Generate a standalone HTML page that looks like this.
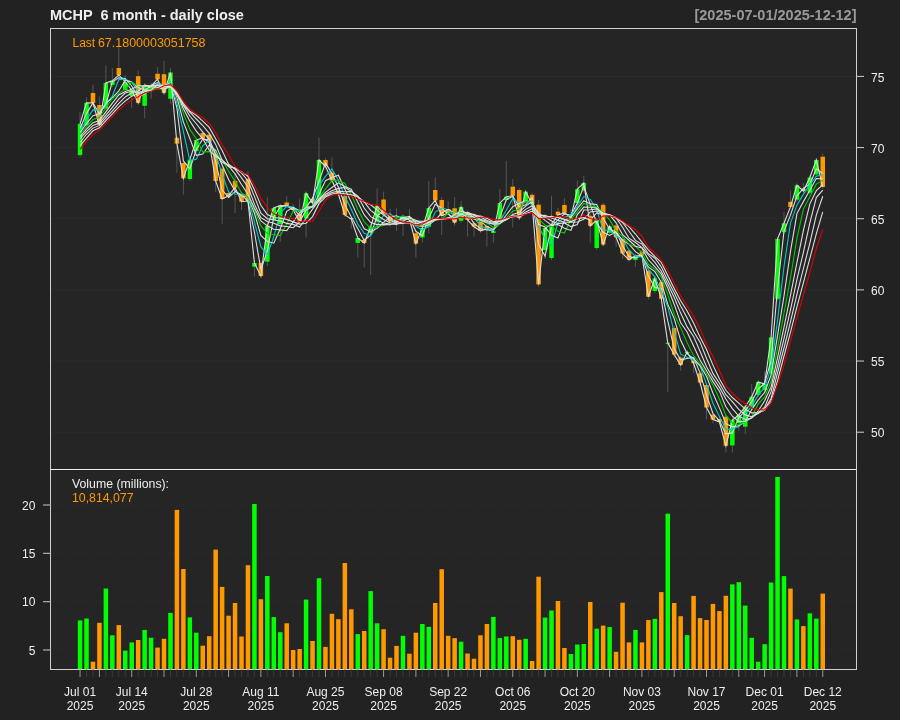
<!DOCTYPE html><html><head><meta charset="utf-8"><style>html,body{margin:0;padding:0;background:#222222;width:900px;height:720px;overflow:hidden}</style></head><body><svg width="900" height="720" viewBox="0 0 900 720" style="position:absolute;left:0;top:0;will-change:transform">
<rect x="0" y="0" width="900" height="720" fill="#222222"/>
<rect x="50.5" y="28.5" width="806" height="641" fill="#252525"/>
<line x1="51" y1="76.40" x2="856" y2="76.40" stroke="#2c2c2c" stroke-width="1"/>
<line x1="51" y1="147.56" x2="856" y2="147.56" stroke="#2c2c2c" stroke-width="1"/>
<line x1="51" y1="218.72" x2="856" y2="218.72" stroke="#2c2c2c" stroke-width="1"/>
<line x1="51" y1="289.88" x2="856" y2="289.88" stroke="#2c2c2c" stroke-width="1"/>
<line x1="51" y1="361.04" x2="856" y2="361.04" stroke="#2c2c2c" stroke-width="1"/>
<line x1="51" y1="432.20" x2="856" y2="432.20" stroke="#2c2c2c" stroke-width="1"/>
<line x1="51" y1="505.00" x2="856" y2="505.00" stroke="#2f2f2f" stroke-width="1" stroke-dasharray="1,2"/>
<line x1="51" y1="553.33" x2="856" y2="553.33" stroke="#2f2f2f" stroke-width="1" stroke-dasharray="1,2"/>
<line x1="51" y1="601.66" x2="856" y2="601.66" stroke="#2f2f2f" stroke-width="1" stroke-dasharray="1,2"/>
<line x1="51" y1="650.00" x2="856" y2="650.00" stroke="#2f2f2f" stroke-width="1" stroke-dasharray="1,2"/>
<line x1="80.05" y1="112.00" x2="80.05" y2="157.00" stroke="#555555" stroke-width="1"/>
<line x1="86.51" y1="97.20" x2="86.51" y2="127.30" stroke="#555555" stroke-width="1"/>
<line x1="92.97" y1="84.70" x2="92.97" y2="105.00" stroke="#555555" stroke-width="1"/>
<line x1="99.42" y1="96.40" x2="99.42" y2="127.00" stroke="#555555" stroke-width="1"/>
<line x1="105.88" y1="65.60" x2="105.88" y2="110.60" stroke="#555555" stroke-width="1"/>
<line x1="112.34" y1="68.00" x2="112.34" y2="87.00" stroke="#555555" stroke-width="1"/>
<line x1="118.80" y1="45.00" x2="118.80" y2="77.00" stroke="#555555" stroke-width="1"/>
<line x1="125.26" y1="75.00" x2="125.26" y2="92.00" stroke="#555555" stroke-width="1"/>
<line x1="131.72" y1="88.00" x2="131.72" y2="108.00" stroke="#555555" stroke-width="1"/>
<line x1="138.17" y1="70.40" x2="138.17" y2="104.90" stroke="#555555" stroke-width="1"/>
<line x1="144.63" y1="83.00" x2="144.63" y2="118.30" stroke="#555555" stroke-width="1"/>
<line x1="151.09" y1="82.50" x2="151.09" y2="98.75" stroke="#555555" stroke-width="1"/>
<line x1="157.55" y1="67.00" x2="157.55" y2="81.20" stroke="#555555" stroke-width="1"/>
<line x1="164.01" y1="60.80" x2="164.01" y2="94.90" stroke="#555555" stroke-width="1"/>
<line x1="170.47" y1="68.00" x2="170.47" y2="103.75" stroke="#555555" stroke-width="1"/>
<line x1="176.92" y1="135.80" x2="176.92" y2="172.80" stroke="#555555" stroke-width="1"/>
<line x1="183.38" y1="161.00" x2="183.38" y2="194.30" stroke="#555555" stroke-width="1"/>
<line x1="189.84" y1="157.60" x2="189.84" y2="181.00" stroke="#555555" stroke-width="1"/>
<line x1="196.30" y1="138.00" x2="196.30" y2="153.00" stroke="#555555" stroke-width="1"/>
<line x1="202.76" y1="131.00" x2="202.76" y2="140.00" stroke="#555555" stroke-width="1"/>
<line x1="209.22" y1="132.60" x2="209.22" y2="144.20" stroke="#555555" stroke-width="1"/>
<line x1="215.67" y1="151.30" x2="215.67" y2="192.00" stroke="#555555" stroke-width="1"/>
<line x1="222.13" y1="166.60" x2="222.13" y2="224.00" stroke="#555555" stroke-width="1"/>
<line x1="228.59" y1="191.00" x2="228.59" y2="197.70" stroke="#555555" stroke-width="1"/>
<line x1="235.05" y1="173.00" x2="235.05" y2="213.00" stroke="#555555" stroke-width="1"/>
<line x1="241.51" y1="192.00" x2="241.51" y2="210.00" stroke="#555555" stroke-width="1"/>
<line x1="247.97" y1="171.00" x2="247.97" y2="203.00" stroke="#555555" stroke-width="1"/>
<line x1="254.42" y1="260.00" x2="254.42" y2="276.70" stroke="#555555" stroke-width="1"/>
<line x1="260.88" y1="261.00" x2="260.88" y2="278.00" stroke="#555555" stroke-width="1"/>
<line x1="267.34" y1="197.50" x2="267.34" y2="266.00" stroke="#555555" stroke-width="1"/>
<line x1="273.80" y1="206.00" x2="273.80" y2="222.00" stroke="#555555" stroke-width="1"/>
<line x1="280.26" y1="203.50" x2="280.26" y2="241.70" stroke="#555555" stroke-width="1"/>
<line x1="286.72" y1="196.25" x2="286.72" y2="207.80" stroke="#555555" stroke-width="1"/>
<line x1="293.17" y1="204.00" x2="293.17" y2="212.00" stroke="#555555" stroke-width="1"/>
<line x1="299.63" y1="198.75" x2="299.63" y2="223.70" stroke="#555555" stroke-width="1"/>
<line x1="306.09" y1="191.25" x2="306.09" y2="237.50" stroke="#555555" stroke-width="1"/>
<line x1="312.55" y1="197.00" x2="312.55" y2="205.00" stroke="#555555" stroke-width="1"/>
<line x1="319.01" y1="137.50" x2="319.01" y2="204.00" stroke="#555555" stroke-width="1"/>
<line x1="325.47" y1="158.00" x2="325.47" y2="168.25" stroke="#555555" stroke-width="1"/>
<line x1="331.92" y1="157.50" x2="331.92" y2="182.60" stroke="#555555" stroke-width="1"/>
<line x1="338.38" y1="189.00" x2="338.38" y2="196.00" stroke="#555555" stroke-width="1"/>
<line x1="344.84" y1="194.25" x2="344.84" y2="217.00" stroke="#555555" stroke-width="1"/>
<line x1="351.30" y1="217.50" x2="351.30" y2="228.75" stroke="#555555" stroke-width="1"/>
<line x1="357.76" y1="236.00" x2="357.76" y2="257.50" stroke="#555555" stroke-width="1"/>
<line x1="364.22" y1="238.00" x2="364.22" y2="267.50" stroke="#555555" stroke-width="1"/>
<line x1="370.67" y1="224.70" x2="370.67" y2="275.00" stroke="#555555" stroke-width="1"/>
<line x1="377.13" y1="188.30" x2="377.13" y2="223.70" stroke="#555555" stroke-width="1"/>
<line x1="383.59" y1="191.70" x2="383.59" y2="215.75" stroke="#555555" stroke-width="1"/>
<line x1="390.05" y1="208.90" x2="390.05" y2="226.25" stroke="#555555" stroke-width="1"/>
<line x1="396.51" y1="208.20" x2="396.51" y2="230.80" stroke="#555555" stroke-width="1"/>
<line x1="402.97" y1="214.50" x2="402.97" y2="236.00" stroke="#555555" stroke-width="1"/>
<line x1="409.42" y1="208.90" x2="409.42" y2="221.00" stroke="#555555" stroke-width="1"/>
<line x1="415.88" y1="231.20" x2="415.88" y2="257.50" stroke="#555555" stroke-width="1"/>
<line x1="422.34" y1="226.00" x2="422.34" y2="242.50" stroke="#555555" stroke-width="1"/>
<line x1="428.80" y1="181.00" x2="428.80" y2="233.00" stroke="#555555" stroke-width="1"/>
<line x1="435.26" y1="177.50" x2="435.26" y2="202.40" stroke="#555555" stroke-width="1"/>
<line x1="441.71" y1="197.00" x2="441.71" y2="235.00" stroke="#555555" stroke-width="1"/>
<line x1="448.17" y1="201.00" x2="448.17" y2="215.00" stroke="#555555" stroke-width="1"/>
<line x1="454.63" y1="197.00" x2="454.63" y2="225.80" stroke="#555555" stroke-width="1"/>
<line x1="461.09" y1="201.00" x2="461.09" y2="222.80" stroke="#555555" stroke-width="1"/>
<line x1="467.55" y1="210.50" x2="467.55" y2="236.70" stroke="#555555" stroke-width="1"/>
<line x1="474.01" y1="221.30" x2="474.01" y2="236.70" stroke="#555555" stroke-width="1"/>
<line x1="480.46" y1="219.70" x2="480.46" y2="232.80" stroke="#555555" stroke-width="1"/>
<line x1="486.92" y1="224.00" x2="486.92" y2="246.70" stroke="#555555" stroke-width="1"/>
<line x1="493.38" y1="229.25" x2="493.38" y2="242.50" stroke="#555555" stroke-width="1"/>
<line x1="499.84" y1="189.00" x2="499.84" y2="221.00" stroke="#555555" stroke-width="1"/>
<line x1="506.30" y1="160.80" x2="506.30" y2="202.00" stroke="#555555" stroke-width="1"/>
<line x1="512.76" y1="179.00" x2="512.76" y2="227.50" stroke="#555555" stroke-width="1"/>
<line x1="519.21" y1="188.00" x2="519.21" y2="220.00" stroke="#555555" stroke-width="1"/>
<line x1="525.67" y1="189.70" x2="525.67" y2="203.70" stroke="#555555" stroke-width="1"/>
<line x1="532.13" y1="192.80" x2="532.13" y2="206.00" stroke="#555555" stroke-width="1"/>
<line x1="538.59" y1="200.00" x2="538.59" y2="287.00" stroke="#555555" stroke-width="1"/>
<line x1="545.05" y1="226.00" x2="545.05" y2="259.00" stroke="#555555" stroke-width="1"/>
<line x1="551.51" y1="195.70" x2="551.51" y2="260.00" stroke="#555555" stroke-width="1"/>
<line x1="557.96" y1="208.00" x2="557.96" y2="217.00" stroke="#555555" stroke-width="1"/>
<line x1="564.42" y1="198.30" x2="564.42" y2="214.90" stroke="#555555" stroke-width="1"/>
<line x1="570.88" y1="209.00" x2="570.88" y2="222.40" stroke="#555555" stroke-width="1"/>
<line x1="577.34" y1="180.40" x2="577.34" y2="205.00" stroke="#555555" stroke-width="1"/>
<line x1="583.80" y1="175.80" x2="583.80" y2="192.40" stroke="#555555" stroke-width="1"/>
<line x1="590.26" y1="213.80" x2="590.26" y2="242.70" stroke="#555555" stroke-width="1"/>
<line x1="596.71" y1="218.00" x2="596.71" y2="250.00" stroke="#555555" stroke-width="1"/>
<line x1="603.17" y1="202.80" x2="603.17" y2="246.50" stroke="#555555" stroke-width="1"/>
<line x1="609.63" y1="224.40" x2="609.63" y2="234.80" stroke="#555555" stroke-width="1"/>
<line x1="616.09" y1="223.50" x2="616.09" y2="247.00" stroke="#555555" stroke-width="1"/>
<line x1="622.55" y1="237.00" x2="622.55" y2="259.00" stroke="#555555" stroke-width="1"/>
<line x1="629.01" y1="248.80" x2="629.01" y2="261.80" stroke="#555555" stroke-width="1"/>
<line x1="635.46" y1="254.00" x2="635.46" y2="267.00" stroke="#555555" stroke-width="1"/>
<line x1="641.92" y1="249.70" x2="641.92" y2="257.30" stroke="#555555" stroke-width="1"/>
<line x1="648.38" y1="268.60" x2="648.38" y2="299.50" stroke="#555555" stroke-width="1"/>
<line x1="654.84" y1="276.30" x2="654.84" y2="293.00" stroke="#555555" stroke-width="1"/>
<line x1="661.30" y1="280.00" x2="661.30" y2="300.80" stroke="#555555" stroke-width="1"/>
<line x1="667.76" y1="340.60" x2="667.76" y2="392.00" stroke="#555555" stroke-width="1"/>
<line x1="674.21" y1="326.00" x2="674.21" y2="356.60" stroke="#555555" stroke-width="1"/>
<line x1="680.67" y1="355.50" x2="680.67" y2="370.80" stroke="#555555" stroke-width="1"/>
<line x1="687.13" y1="350.00" x2="687.13" y2="355.00" stroke="#555555" stroke-width="1"/>
<line x1="693.59" y1="358.80" x2="693.59" y2="373.30" stroke="#555555" stroke-width="1"/>
<line x1="700.05" y1="371.30" x2="700.05" y2="384.50" stroke="#555555" stroke-width="1"/>
<line x1="706.51" y1="383.00" x2="706.51" y2="419.60" stroke="#555555" stroke-width="1"/>
<line x1="712.96" y1="412.60" x2="712.96" y2="423.30" stroke="#555555" stroke-width="1"/>
<line x1="719.42" y1="417.00" x2="719.42" y2="424.00" stroke="#555555" stroke-width="1"/>
<line x1="725.88" y1="414.70" x2="725.88" y2="452.50" stroke="#555555" stroke-width="1"/>
<line x1="732.34" y1="418.00" x2="732.34" y2="452.50" stroke="#555555" stroke-width="1"/>
<line x1="738.80" y1="413.00" x2="738.80" y2="431.00" stroke="#555555" stroke-width="1"/>
<line x1="745.25" y1="404.70" x2="745.25" y2="434.00" stroke="#555555" stroke-width="1"/>
<line x1="751.71" y1="384.00" x2="751.71" y2="408.70" stroke="#555555" stroke-width="1"/>
<line x1="758.17" y1="380.00" x2="758.17" y2="396.80" stroke="#555555" stroke-width="1"/>
<line x1="764.63" y1="371.00" x2="764.63" y2="392.00" stroke="#555555" stroke-width="1"/>
<line x1="771.09" y1="335.40" x2="771.09" y2="375.40" stroke="#555555" stroke-width="1"/>
<line x1="777.55" y1="236.90" x2="777.55" y2="300.90" stroke="#555555" stroke-width="1"/>
<line x1="784.00" y1="212.00" x2="784.00" y2="234.20" stroke="#555555" stroke-width="1"/>
<line x1="790.46" y1="190.60" x2="790.46" y2="208.90" stroke="#555555" stroke-width="1"/>
<line x1="796.92" y1="183.30" x2="796.92" y2="201.70" stroke="#555555" stroke-width="1"/>
<line x1="803.38" y1="183.00" x2="803.38" y2="193.00" stroke="#555555" stroke-width="1"/>
<line x1="809.84" y1="175.50" x2="809.84" y2="194.80" stroke="#555555" stroke-width="1"/>
<line x1="816.30" y1="158.00" x2="816.30" y2="176.40" stroke="#555555" stroke-width="1"/>
<line x1="822.75" y1="153.30" x2="822.75" y2="188.90" stroke="#555555" stroke-width="1"/>
<rect x="77.80" y="123.90" width="4.5" height="31.20" fill="#00ff00"/>
<rect x="84.26" y="102.80" width="4.5" height="22.50" fill="#00ff00"/>
<rect x="90.72" y="93.00" width="4.5" height="10.00" fill="#ff9900"/>
<rect x="97.17" y="105.00" width="4.5" height="20.00" fill="#ff9900"/>
<rect x="103.63" y="83.00" width="4.5" height="25.60" fill="#00ff00"/>
<rect x="110.09" y="80.80" width="4.5" height="4.20" fill="#00ff00"/>
<rect x="116.55" y="68.00" width="4.5" height="7.00" fill="#ff9900"/>
<rect x="123.01" y="82.00" width="4.5" height="8.00" fill="#00ff00"/>
<rect x="129.47" y="90.00" width="4.5" height="6.00" fill="#00ff00"/>
<rect x="135.92" y="76.20" width="4.5" height="26.70" fill="#ff9900"/>
<rect x="142.38" y="85.00" width="4.5" height="20.80" fill="#00ff00"/>
<rect x="148.84" y="86.00" width="4.5" height="4.00" fill="#00ff00"/>
<rect x="155.30" y="73.75" width="4.5" height="5.45" fill="#ff9900"/>
<rect x="161.76" y="74.20" width="4.5" height="18.70" fill="#ff9900"/>
<rect x="168.22" y="72.50" width="4.5" height="26.25" fill="#00ff00"/>
<rect x="174.67" y="137.80" width="4.5" height="5.80" fill="#ff9900"/>
<rect x="181.13" y="163.00" width="4.5" height="15.30" fill="#ff9900"/>
<rect x="187.59" y="159.60" width="4.5" height="19.40" fill="#00ff00"/>
<rect x="194.05" y="140.00" width="4.5" height="11.00" fill="#00ff00"/>
<rect x="200.51" y="133.00" width="4.5" height="5.00" fill="#ff9900"/>
<rect x="206.97" y="134.60" width="4.5" height="7.60" fill="#ff9900"/>
<rect x="213.42" y="153.30" width="4.5" height="27.70" fill="#ff9900"/>
<rect x="219.88" y="168.60" width="4.5" height="30.40" fill="#ff9900"/>
<rect x="226.34" y="193.00" width="4.5" height="2.70" fill="#ff9900"/>
<rect x="232.80" y="180.80" width="4.5" height="6.70" fill="#ff9900"/>
<rect x="239.26" y="194.00" width="4.5" height="7.70" fill="#ff9900"/>
<rect x="245.72" y="179.00" width="4.5" height="22.00" fill="#ff9900"/>
<rect x="252.17" y="263.00" width="4.5" height="3.70" fill="#00ff00"/>
<rect x="258.63" y="263.00" width="4.5" height="13.00" fill="#ff9900"/>
<rect x="265.09" y="225.80" width="4.5" height="35.90" fill="#00ff00"/>
<rect x="271.55" y="208.00" width="4.5" height="12.00" fill="#00ff00"/>
<rect x="278.01" y="205.50" width="4.5" height="18.50" fill="#00ff00"/>
<rect x="284.47" y="202.50" width="4.5" height="3.30" fill="#ff9900"/>
<rect x="290.92" y="208.00" width="4.5" height="2.00" fill="#ff9900"/>
<rect x="297.38" y="213.30" width="4.5" height="8.40" fill="#ff9900"/>
<rect x="303.84" y="193.30" width="4.5" height="25.00" fill="#00ff00"/>
<rect x="310.30" y="199.00" width="4.5" height="4.00" fill="#ff9900"/>
<rect x="316.76" y="160.00" width="4.5" height="42.00" fill="#00ff00"/>
<rect x="323.22" y="160.00" width="4.5" height="6.25" fill="#ff9900"/>
<rect x="329.67" y="172.50" width="4.5" height="8.10" fill="#ff9900"/>
<rect x="336.13" y="191.00" width="4.5" height="3.00" fill="#ff9900"/>
<rect x="342.59" y="196.25" width="4.5" height="18.75" fill="#ff9900"/>
<rect x="349.05" y="218.00" width="4.5" height="1.00" fill="#ff9900"/>
<rect x="355.51" y="238.00" width="4.5" height="5.00" fill="#00ff00"/>
<rect x="361.97" y="240.00" width="4.5" height="3.00" fill="#ff9900"/>
<rect x="368.42" y="226.70" width="4.5" height="6.30" fill="#00ff00"/>
<rect x="374.88" y="205.80" width="4.5" height="15.90" fill="#00ff00"/>
<rect x="381.34" y="199.50" width="4.5" height="14.25" fill="#ff9900"/>
<rect x="387.80" y="215.80" width="4.5" height="5.60" fill="#ff9900"/>
<rect x="394.26" y="219.30" width="4.5" height="2.70" fill="#ff9900"/>
<rect x="400.72" y="216.50" width="4.5" height="4.20" fill="#00ff00"/>
<rect x="407.17" y="217.20" width="4.5" height="1.80" fill="#ff9900"/>
<rect x="413.63" y="233.20" width="4.5" height="10.40" fill="#ff9900"/>
<rect x="420.09" y="228.00" width="4.5" height="9.50" fill="#00ff00"/>
<rect x="426.55" y="208.00" width="4.5" height="18.70" fill="#00ff00"/>
<rect x="433.01" y="190.00" width="4.5" height="10.40" fill="#ff9900"/>
<rect x="439.46" y="200.00" width="4.5" height="15.80" fill="#ff9900"/>
<rect x="445.92" y="209.00" width="4.5" height="4.00" fill="#ff9900"/>
<rect x="452.38" y="208.30" width="4.5" height="14.20" fill="#ff9900"/>
<rect x="458.84" y="207.00" width="4.5" height="13.80" fill="#00ff00"/>
<rect x="465.30" y="212.50" width="4.5" height="7.50" fill="#ff9900"/>
<rect x="471.76" y="223.30" width="4.5" height="3.40" fill="#ff9900"/>
<rect x="478.21" y="221.70" width="4.5" height="9.10" fill="#ff9900"/>
<rect x="484.67" y="226.00" width="4.5" height="3.00" fill="#ff9900"/>
<rect x="491.13" y="231.25" width="4.5" height="1.75" fill="#00ff00"/>
<rect x="497.59" y="203.00" width="4.5" height="16.00" fill="#00ff00"/>
<rect x="504.05" y="196.70" width="4.5" height="3.30" fill="#00ff00"/>
<rect x="510.51" y="186.70" width="4.5" height="9.10" fill="#ff9900"/>
<rect x="516.96" y="190.00" width="4.5" height="28.00" fill="#ff9900"/>
<rect x="523.42" y="191.70" width="4.5" height="10.00" fill="#00ff00"/>
<rect x="529.88" y="194.80" width="4.5" height="9.20" fill="#ff9900"/>
<rect x="536.34" y="204.70" width="4.5" height="79.70" fill="#ff9900"/>
<rect x="542.80" y="228.00" width="4.5" height="22.00" fill="#00ff00"/>
<rect x="549.26" y="224.60" width="4.5" height="33.40" fill="#00ff00"/>
<rect x="555.71" y="211.70" width="4.5" height="3.30" fill="#ff9900"/>
<rect x="562.17" y="205.00" width="4.5" height="7.90" fill="#ff9900"/>
<rect x="568.63" y="217.50" width="4.5" height="2.90" fill="#00ff00"/>
<rect x="575.09" y="189.20" width="4.5" height="13.80" fill="#00ff00"/>
<rect x="581.55" y="183.00" width="4.5" height="7.40" fill="#00ff00"/>
<rect x="588.01" y="215.80" width="4.5" height="10.00" fill="#ff9900"/>
<rect x="594.46" y="220.00" width="4.5" height="28.00" fill="#00ff00"/>
<rect x="600.92" y="204.80" width="4.5" height="39.70" fill="#ff9900"/>
<rect x="607.38" y="226.40" width="4.5" height="6.40" fill="#00ff00"/>
<rect x="613.84" y="225.50" width="4.5" height="11.80" fill="#ff9900"/>
<rect x="620.30" y="239.00" width="4.5" height="14.50" fill="#ff9900"/>
<rect x="626.76" y="250.80" width="4.5" height="9.00" fill="#ff9900"/>
<rect x="633.21" y="256.00" width="4.5" height="4.00" fill="#00ff00"/>
<rect x="639.67" y="251.70" width="4.5" height="3.60" fill="#ff9900"/>
<rect x="646.13" y="270.60" width="4.5" height="26.20" fill="#ff9900"/>
<rect x="652.59" y="278.30" width="4.5" height="12.70" fill="#00ff00"/>
<rect x="659.05" y="282.00" width="4.5" height="16.80" fill="#ff9900"/>
<rect x="665.51" y="342.80" width="4.5" height="1.00" fill="#00ff00"/>
<rect x="671.96" y="328.00" width="4.5" height="26.60" fill="#ff9900"/>
<rect x="678.42" y="357.50" width="4.5" height="7.50" fill="#ff9900"/>
<rect x="684.88" y="352.00" width="4.5" height="1.00" fill="#00ff00"/>
<rect x="691.34" y="360.80" width="4.5" height="2.50" fill="#ff9900"/>
<rect x="697.80" y="373.30" width="4.5" height="9.20" fill="#ff9900"/>
<rect x="704.26" y="385.00" width="4.5" height="22.50" fill="#ff9900"/>
<rect x="710.71" y="414.60" width="4.5" height="5.00" fill="#ff9900"/>
<rect x="717.17" y="419.00" width="4.5" height="3.00" fill="#ff9900"/>
<rect x="723.63" y="416.70" width="4.5" height="29.10" fill="#ff9900"/>
<rect x="730.09" y="420.00" width="4.5" height="25.40" fill="#00ff00"/>
<rect x="736.55" y="415.00" width="4.5" height="8.00" fill="#00ff00"/>
<rect x="743.00" y="406.70" width="4.5" height="20.00" fill="#00ff00"/>
<rect x="749.46" y="396.70" width="4.5" height="10.00" fill="#00ff00"/>
<rect x="755.92" y="382.00" width="4.5" height="12.80" fill="#00ff00"/>
<rect x="762.38" y="384.00" width="4.5" height="6.00" fill="#00ff00"/>
<rect x="768.84" y="337.40" width="4.5" height="36.00" fill="#00ff00"/>
<rect x="775.30" y="238.90" width="4.5" height="60.00" fill="#00ff00"/>
<rect x="781.75" y="223.30" width="4.5" height="8.90" fill="#00ff00"/>
<rect x="788.21" y="201.90" width="4.5" height="5.00" fill="#ff9900"/>
<rect x="794.67" y="185.30" width="4.5" height="14.40" fill="#00ff00"/>
<rect x="801.13" y="189.00" width="4.5" height="2.00" fill="#ff9900"/>
<rect x="807.59" y="177.50" width="4.5" height="15.30" fill="#00ff00"/>
<rect x="814.05" y="160.00" width="4.5" height="14.40" fill="#00ff00"/>
<rect x="820.50" y="156.70" width="4.5" height="30.20" fill="#ff9900"/>
<polyline points="80.05,123.90 86.51,102.80 92.97,103.00 99.42,125.00 105.88,83.00 112.34,80.80 118.80,75.00 125.26,82.00 131.72,90.00 138.17,102.90 144.63,85.00 151.09,86.00 157.55,79.20 164.01,92.90 170.47,72.50 176.92,143.60 183.38,178.30 189.84,159.60 196.30,140.00 202.76,138.00 209.22,142.20 215.67,181.00 222.13,199.00 228.59,195.70 235.05,187.50 241.51,201.70 247.97,201.00 254.42,263.00 260.88,276.00 267.34,225.80 273.80,208.00 280.26,205.50 286.72,205.80 293.17,210.00 299.63,221.70 306.09,193.30 312.55,203.00 319.01,160.00 325.47,166.25 331.92,180.60 338.38,194.00 344.84,215.00 351.30,219.00 357.76,238.00 364.22,243.00 370.67,226.70 377.13,205.80 383.59,213.75 390.05,221.40 396.51,222.00 402.97,216.50 409.42,219.00 415.88,243.60 422.34,228.00 428.80,208.00 435.26,200.40 441.71,215.80 448.17,213.00 454.63,222.50 461.09,207.00 467.55,220.00 474.01,226.70 480.46,230.80 486.92,229.00 493.38,231.25 499.84,203.00 506.30,196.70 512.76,195.80 519.21,218.00 525.67,191.70 532.13,204.00 538.59,284.40 545.05,228.00 551.51,224.60 557.96,215.00 564.42,212.90 570.88,217.50 577.34,189.20 583.80,183.00 590.26,225.80 596.71,220.00 603.17,244.50 609.63,226.40 616.09,237.30 622.55,253.50 629.01,259.80 635.46,256.00 641.92,255.30 648.38,296.80 654.84,278.30 661.30,298.80 667.76,342.80 674.21,354.60 680.67,365.00 687.13,352.00 693.59,363.30 700.05,382.50 706.51,407.50 712.96,419.60 719.42,422.00 725.88,445.80 732.34,420.00 738.80,415.00 745.25,406.70 751.71,396.70 758.17,382.00 764.63,384.00 771.09,337.40 777.55,238.90 784.00,223.30 790.46,206.90 796.92,185.30 803.38,191.00 809.84,177.50 816.30,160.00 822.75,186.90" fill="none" stroke="#dddddd" stroke-width="1.1"/>
<polyline points="80.05,128.50 86.51,113.35 92.97,102.90 99.42,114.00 105.88,104.00 112.34,81.90 118.80,77.90 125.26,78.50 131.72,86.00 138.17,96.45 144.63,93.95 151.09,85.50 157.55,82.60 164.01,86.05 170.47,82.70 176.92,108.05 183.38,160.95 189.84,168.95 196.30,149.80 202.76,139.00 209.22,140.10 215.67,161.60 222.13,190.00 228.59,197.35 235.05,191.60 241.51,194.60 247.97,201.35 254.42,232.00 260.88,269.50 267.34,250.90 273.80,216.90 280.26,206.75 286.72,205.65 293.17,207.90 299.63,215.85 306.09,207.50 312.55,198.15 319.01,181.50 325.47,163.12 331.92,173.43 338.38,187.30 344.84,204.50 351.30,217.00 357.76,228.50 364.22,240.50 370.67,234.85 377.13,216.25 383.59,209.78 390.05,217.57 396.51,221.70 402.97,219.25 409.42,217.75 415.88,231.30 422.34,235.80 428.80,218.00 435.26,204.20 441.71,208.10 448.17,214.40 454.63,217.75 461.09,214.75 467.55,213.50 474.01,223.35 480.46,228.75 486.92,229.90 493.38,230.12 499.84,217.12 506.30,199.85 512.76,196.25 519.21,206.90 525.67,204.85 532.13,197.85 538.59,244.20 545.05,256.20 551.51,226.30 557.96,219.80 564.42,213.95 570.88,215.20 577.34,203.35 583.80,186.10 590.26,204.40 596.71,222.90 603.17,232.25 609.63,235.45 616.09,231.85 622.55,245.40 629.01,256.65 635.46,257.90 641.92,255.65 648.38,276.05 654.84,287.55 661.30,288.55 667.76,320.80 674.21,348.70 680.67,359.80 687.13,358.50 693.59,357.65 700.05,372.90 706.51,395.00 712.96,413.55 719.42,420.80 725.88,433.90 732.34,432.90 738.80,417.50 745.25,410.85 751.71,401.70 758.17,389.35 764.63,383.00 771.09,360.70 777.55,288.15 784.00,231.10 790.46,215.10 796.92,196.10 803.38,188.15 809.84,184.25 816.30,168.75 822.75,173.45" fill="none" stroke="#dddddd" stroke-width="1.1"/>
<polyline points="80.05,130.60 86.51,119.93 92.97,109.90 99.42,110.27 105.88,103.67 112.34,96.27 118.80,79.60 125.26,79.27 131.72,82.33 138.17,91.63 144.63,92.63 151.09,91.30 157.55,83.40 164.01,86.03 170.47,81.53 176.92,103.00 183.38,131.47 189.84,160.50 196.30,159.30 202.76,145.87 209.22,140.07 215.67,153.73 222.13,174.07 228.59,191.90 235.05,194.07 241.51,194.97 247.97,196.73 254.42,221.90 260.88,246.67 267.34,254.93 273.80,236.60 280.26,213.10 286.72,206.43 293.17,207.10 299.63,212.50 306.09,208.33 312.55,206.00 319.01,185.43 325.47,176.42 331.92,168.95 338.38,180.28 344.84,196.53 351.30,209.33 357.76,224.00 364.22,233.33 370.67,235.90 377.13,225.17 383.59,215.42 390.05,213.65 396.51,219.05 402.97,219.97 409.42,219.17 415.88,226.37 422.34,230.20 428.80,226.53 435.26,212.13 441.71,208.07 448.17,209.73 454.63,217.10 461.09,214.17 467.55,216.50 474.01,217.90 480.46,225.83 486.92,228.83 493.38,230.35 499.84,221.08 506.30,210.32 512.76,198.50 519.21,203.50 525.67,201.83 532.13,204.57 538.59,226.70 545.05,238.80 551.51,245.67 557.96,222.53 564.42,217.50 570.88,215.13 577.34,206.53 583.80,196.57 590.26,199.33 596.71,209.60 603.17,230.10 609.63,230.30 616.09,236.07 622.55,239.07 629.01,250.20 635.46,256.43 641.92,257.03 648.38,269.37 654.84,276.80 661.30,291.30 667.76,306.63 674.21,332.07 680.67,354.13 687.13,357.20 693.59,360.10 700.05,365.93 706.51,384.43 712.96,403.20 719.42,416.37 725.88,429.13 732.34,429.27 738.80,426.93 745.25,413.90 751.71,406.13 758.17,395.13 764.63,387.57 771.09,367.80 777.55,320.10 784.00,266.53 790.46,223.03 796.92,205.17 803.38,194.40 809.84,184.60 816.30,176.17 822.75,174.80" fill="none" stroke="#00cdcd" stroke-width="1.1"/>
<polyline points="80.05,132.50 86.51,123.65 92.97,115.70 99.42,113.67 105.88,103.45 112.34,97.95 118.80,90.95 125.26,80.20 131.72,81.95 138.17,87.47 144.63,89.97 151.09,90.97 157.55,88.27 164.01,85.78 170.47,82.65 176.92,97.05 183.38,121.83 189.84,138.50 196.30,155.38 202.76,153.97 209.22,144.95 215.67,150.30 222.13,165.05 228.59,179.48 235.05,190.80 241.51,195.97 247.97,196.47 254.42,213.30 260.88,235.43 267.34,241.45 273.80,243.20 280.26,228.82 286.72,211.28 293.17,207.32 299.63,210.75 306.09,207.70 312.55,207.00 319.01,194.50 325.47,180.64 331.92,177.46 338.38,175.21 344.84,188.96 351.30,202.15 357.76,216.50 364.22,228.75 370.67,231.68 377.13,228.38 383.59,222.31 390.05,216.91 396.51,215.74 402.97,218.41 409.42,219.72 415.88,225.28 422.34,226.78 428.80,224.65 435.26,220.00 441.71,213.05 448.17,209.30 454.63,212.93 461.09,214.57 467.55,215.62 474.01,219.05 480.46,221.12 486.92,226.62 493.38,229.44 499.84,223.51 506.30,214.99 512.76,206.69 519.21,203.38 525.67,200.55 532.13,202.38 538.59,224.53 545.05,227.02 551.51,235.25 557.96,238.00 564.42,220.12 570.88,217.50 577.34,208.65 583.80,200.65 590.26,203.88 596.71,204.50 603.17,218.32 609.63,229.18 616.09,232.05 622.55,240.43 629.01,244.25 635.46,251.65 641.92,256.15 648.38,266.98 654.84,271.60 661.30,282.30 667.76,304.18 674.21,318.62 680.67,340.30 687.13,353.60 693.59,358.72 700.05,365.70 706.51,376.32 712.96,393.23 719.42,407.90 725.88,423.72 732.34,426.85 738.80,425.70 745.25,421.88 751.71,409.60 758.17,400.10 764.63,392.35 771.09,375.02 777.55,335.58 784.00,295.90 790.46,251.62 796.92,213.60 803.38,201.62 809.84,190.18 816.30,178.45 822.75,178.85" fill="none" stroke="#dddddd" stroke-width="1.1"/>
<polyline points="80.05,134.50 86.51,126.56 92.97,119.52 99.42,117.56 105.88,107.54 112.34,98.92 118.80,93.36 125.26,89.16 131.72,82.16 138.17,86.14 144.63,86.98 151.09,89.18 157.55,88.62 164.01,89.20 170.47,83.12 176.92,94.84 183.38,113.30 189.84,129.38 196.30,138.80 202.76,151.90 209.22,151.62 215.67,152.16 222.13,160.04 228.59,171.18 235.05,181.08 241.51,192.98 247.97,196.98 254.42,209.78 260.88,225.84 267.34,233.50 273.80,234.76 280.26,235.66 286.72,224.22 293.17,211.02 299.63,210.20 306.09,207.26 312.55,206.76 319.01,197.60 325.47,188.85 331.92,180.63 338.38,180.77 344.84,183.17 351.30,194.97 357.76,209.32 364.22,221.80 370.67,228.34 377.13,226.50 383.59,225.45 390.05,222.13 396.51,217.93 402.97,215.89 409.42,218.53 415.88,224.50 422.34,225.82 428.80,223.02 435.26,219.80 441.71,219.16 448.17,213.04 454.63,211.94 461.09,211.74 467.55,215.66 474.01,217.84 480.46,221.40 486.92,222.70 493.38,227.55 499.84,224.15 506.30,218.15 512.76,211.15 519.21,208.95 525.67,201.04 532.13,201.24 538.59,218.78 545.05,225.22 551.51,226.54 557.96,231.20 564.42,232.98 570.88,219.60 577.34,211.84 583.80,203.52 590.26,205.68 596.71,207.10 603.17,212.50 609.63,219.94 616.09,230.80 622.55,236.34 629.01,244.30 635.46,246.60 641.92,252.38 648.38,264.28 654.84,269.24 661.30,277.04 667.76,294.40 674.21,314.26 680.67,327.90 687.13,342.64 693.59,355.54 700.05,363.48 706.51,374.06 712.96,384.98 719.42,398.98 725.88,415.48 732.34,422.98 738.80,424.48 745.25,421.90 751.71,416.84 758.17,404.08 764.63,396.88 771.09,381.36 777.55,347.80 784.00,313.12 790.46,278.10 796.92,238.36 803.38,209.08 809.84,196.80 816.30,184.14 822.75,180.14" fill="none" stroke="#00cd00" stroke-width="1.1"/>
<polyline points="80.05,136.50 86.51,129.22 92.97,122.63 99.42,120.43 105.88,111.80 112.34,103.08 118.80,94.93 125.26,91.47 131.72,89.30 138.17,85.62 144.63,85.95 151.09,86.82 157.55,87.52 164.01,89.33 170.47,86.42 176.92,93.20 183.38,108.75 189.84,121.02 196.30,131.15 202.76,138.67 209.22,150.28 215.67,156.52 222.13,159.97 228.59,165.98 235.05,173.90 241.51,184.52 247.97,194.32 254.42,207.98 260.88,220.82 267.34,225.83 273.80,229.25 280.26,229.88 286.72,230.68 293.17,221.85 299.63,212.80 306.09,207.38 312.55,206.55 319.01,198.97 325.47,192.38 331.92,187.47 338.38,182.86 344.84,186.47 351.30,189.14 357.76,202.14 364.22,214.93 370.67,222.62 377.13,224.58 383.59,224.38 390.05,224.78 396.51,222.11 402.97,217.69 409.42,216.41 415.88,222.71 422.34,225.08 428.80,222.85 435.26,219.25 441.71,219.13 448.17,218.13 454.63,214.62 461.09,211.12 467.55,213.12 474.01,217.50 480.46,220.00 486.92,222.67 493.38,224.12 499.84,223.46 506.30,219.58 512.76,214.42 519.21,212.29 525.67,206.08 532.13,201.53 538.59,215.10 545.05,220.32 551.51,225.12 557.96,224.62 564.42,228.15 570.88,230.40 577.34,214.53 583.80,207.03 590.26,207.23 596.71,208.07 603.17,213.33 609.63,214.82 616.09,222.83 622.55,234.58 629.01,240.25 635.46,246.25 641.92,248.05 648.38,259.78 654.84,266.62 661.30,274.17 667.76,288.00 674.21,304.43 680.67,322.72 687.13,331.92 693.59,346.08 700.05,360.03 706.51,370.82 712.96,381.65 719.42,391.15 725.88,406.78 732.34,416.23 738.80,421.65 745.25,421.52 751.71,417.70 758.17,411.03 764.63,400.73 771.09,386.97 777.55,357.62 784.00,327.05 790.46,295.42 796.92,262.63 803.38,230.47 809.84,203.82 816.30,190.67 822.75,184.60" fill="none" stroke="#dddddd" stroke-width="1.1"/>
<polyline points="80.05,138.75 86.51,131.69 92.97,125.47 99.42,122.97 105.88,115.09 112.34,107.37 118.80,99.07 125.26,93.09 131.72,91.26 138.17,91.24 144.63,85.53 151.09,85.96 157.55,85.73 164.01,88.29 170.47,86.93 176.92,94.59 183.38,105.36 189.84,116.01 196.30,123.73 202.76,132.13 209.22,139.17 215.67,154.67 222.13,162.59 228.59,165.07 235.05,169.06 241.51,177.87 247.97,186.87 254.42,204.13 260.88,217.70 267.34,221.53 273.80,223.29 280.26,225.86 286.72,226.44 293.17,227.73 299.63,221.83 306.09,210.01 312.55,206.76 319.01,199.90 325.47,194.29 331.92,190.69 338.38,188.41 344.84,187.45 351.30,191.12 357.76,196.12 364.22,207.98 370.67,216.61 377.13,220.21 383.59,223.04 390.05,223.95 396.51,224.38 402.97,221.31 409.42,217.88 415.88,220.29 422.34,223.46 428.80,222.64 435.26,219.64 441.71,218.76 448.17,218.26 454.63,218.76 461.09,213.53 467.55,212.39 474.01,215.06 480.46,219.40 486.92,221.29 493.38,223.89 499.84,221.11 506.30,219.64 512.76,216.18 519.21,214.94 525.67,209.35 532.13,205.78 538.59,213.37 545.05,216.94 551.51,220.93 557.96,223.67 564.42,222.94 570.88,226.63 577.34,224.51 583.80,210.03 590.26,209.71 596.71,209.06 603.17,213.27 609.63,215.20 616.09,218.03 622.55,227.21 629.01,238.19 635.46,242.50 641.92,247.54 648.38,255.01 654.84,262.43 661.30,271.21 667.76,283.97 674.21,297.51 680.67,313.09 687.13,326.90 693.59,336.40 700.05,351.29 706.51,366.81 712.96,377.79 719.42,387.41 725.88,398.96 732.34,408.67 738.80,416.06 745.25,419.51 751.71,417.97 758.17,412.60 764.63,407.17 771.09,391.69 777.55,365.81 784.00,338.43 790.46,309.89 796.92,279.69 803.38,252.40 809.84,222.90 816.30,197.56 822.75,190.13" fill="none" stroke="#dddddd" stroke-width="1.1"/>
<polyline points="80.05,142.50 86.51,134.26 92.97,128.10 99.42,125.41 105.88,117.97 112.34,110.80 118.80,103.32 125.26,96.94 131.72,92.70 138.17,92.71 144.63,90.46 151.09,85.59 157.55,85.11 164.01,86.62 170.47,86.31 176.92,94.01 183.38,105.05 189.84,112.14 196.30,119.01 202.76,125.51 209.22,133.39 215.67,144.40 222.13,160.21 228.59,166.72 235.05,167.88 241.51,173.14 247.97,180.76 254.42,196.39 260.88,213.11 267.34,218.71 273.80,219.84 280.26,221.06 286.72,223.35 293.17,224.39 299.63,226.97 306.09,218.26 312.55,209.14 319.01,200.91 325.47,195.69 331.92,192.58 338.38,191.11 344.84,191.73 351.30,191.39 357.76,196.98 364.22,201.98 370.67,210.32 377.13,215.26 383.59,219.41 390.05,222.83 396.51,223.71 402.97,223.39 409.42,221.02 415.88,221.09 422.34,221.26 428.80,221.53 435.26,219.86 441.71,219.16 448.17,218.04 454.63,218.79 461.09,217.29 467.55,214.34 474.01,214.18 480.46,217.03 486.92,220.60 493.38,222.53 499.84,221.28 506.30,218.06 512.76,216.66 519.21,216.41 525.67,212.03 532.13,208.68 538.59,215.61 545.05,215.20 551.51,217.90 557.96,220.19 564.42,222.32 570.88,222.26 577.34,221.95 583.80,219.32 590.26,212.00 596.71,211.00 603.17,213.49 609.63,214.91 616.09,217.96 622.55,222.46 629.01,231.29 635.46,240.41 641.92,244.10 648.38,253.70 654.84,257.93 661.30,266.98 667.76,280.16 674.21,292.80 680.67,305.95 687.13,317.95 693.59,331.45 700.05,342.16 706.51,358.31 712.96,373.41 719.42,383.31 725.88,394.71 732.34,401.59 738.80,409.46 745.25,414.89 751.71,416.66 758.17,413.48 764.63,409.02 771.09,398.45 777.55,372.59 784.00,348.00 790.46,321.99 796.92,294.31 803.38,268.60 809.84,243.04 816.30,215.04 822.75,196.22" fill="none" stroke="#dddddd" stroke-width="1.1"/>
<polyline points="80.05,145.60 86.51,138.09 92.97,130.78 99.42,127.76 105.88,120.70 112.34,113.84 118.80,106.82 125.26,100.96 131.72,96.17 138.17,93.83 144.63,91.86 151.09,89.97 157.55,84.88 164.01,85.98 170.47,85.06 176.92,92.68 183.38,103.38 189.84,111.11 196.30,115.23 202.76,121.12 209.22,127.37 215.67,138.68 222.13,150.47 228.59,164.16 235.05,169.03 241.51,171.63 247.97,176.23 254.42,189.90 260.88,205.23 267.34,214.52 273.80,217.52 280.26,218.24 286.72,219.37 293.17,221.87 299.63,224.09 306.09,223.23 312.55,216.57 319.01,203.68 325.47,197.06 331.92,194.02 338.38,192.74 344.84,193.76 351.30,194.76 357.76,196.57 364.22,202.09 370.67,204.73 377.13,209.82 383.59,215.09 390.05,219.63 396.51,222.74 402.97,222.91 409.42,222.91 415.88,223.53 422.34,221.86 428.80,219.78 435.26,219.18 441.71,219.41 448.17,218.48 454.63,218.53 461.09,217.48 467.55,217.59 474.01,215.71 480.46,216.02 486.92,218.36 493.38,221.78 499.84,220.36 506.30,218.55 512.76,215.58 519.21,216.81 525.67,213.66 532.13,211.14 538.59,217.09 545.05,216.98 551.51,216.24 557.96,217.58 564.42,219.38 570.88,221.79 577.34,218.59 583.80,217.62 590.26,220.04 596.71,212.89 603.17,214.72 609.63,214.92 616.09,217.40 622.55,221.91 629.01,226.61 635.46,234.03 641.92,242.07 648.38,249.96 654.84,256.43 661.30,262.47 667.76,275.40 674.21,288.43 680.67,300.82 687.13,311.07 693.59,322.99 700.05,337.12 706.51,349.42 712.96,365.12 719.42,378.81 725.88,390.26 732.34,397.52 738.80,403.08 745.25,409.16 751.71,412.87 758.17,412.81 764.63,410.20 771.09,401.07 777.55,380.72 784.00,356.00 790.46,332.32 796.92,306.80 803.38,282.83 809.84,258.48 816.30,233.81 822.75,211.91" fill="none" stroke="#dddddd" stroke-width="1.1"/>
<polyline points="80.05,149.40 86.51,141.32 92.97,134.58 99.42,130.20 105.88,123.28 112.34,116.71 118.80,109.96 125.26,104.34 131.72,99.86 138.17,96.84 144.63,92.95 151.09,91.27 157.55,88.89 164.01,85.68 170.47,84.63 176.92,90.91 183.38,101.24 189.84,109.00 196.30,114.00 202.76,117.51 209.22,123.23 215.67,132.73 222.13,144.71 228.59,154.99 235.05,166.49 241.51,172.30 247.97,174.57 254.42,184.91 260.88,198.51 267.34,207.29 273.80,213.87 280.26,216.32 286.72,217.00 293.17,218.43 299.63,221.85 306.09,221.01 312.55,221.21 319.01,210.91 325.47,199.94 331.92,195.42 338.38,194.01 344.84,194.97 351.30,196.28 357.76,199.08 364.22,201.22 370.67,204.56 377.13,204.83 383.59,210.21 390.05,215.72 396.51,219.87 402.97,222.12 409.42,222.52 415.88,224.97 422.34,223.97 428.80,220.47 435.26,217.84 441.71,218.85 448.17,218.77 454.63,218.88 461.09,217.38 467.55,217.73 474.01,218.50 480.46,217.22 486.92,217.32 493.38,219.64 499.84,219.91 506.30,217.99 512.76,216.28 519.21,215.82 525.67,214.29 532.13,212.69 538.59,218.47 545.05,218.19 551.51,217.74 557.96,216.12 564.42,217.11 570.88,219.19 577.34,218.53 583.80,215.03 590.26,218.44 596.71,220.04 603.17,216.05 609.63,215.89 616.09,217.16 622.55,221.01 629.01,225.70 635.46,229.55 641.92,236.16 648.38,247.54 654.84,252.79 661.30,260.67 667.76,270.50 674.21,283.32 680.67,296.09 687.13,305.94 693.59,316.29 700.05,328.94 706.51,344.16 712.96,356.44 719.42,370.81 725.88,385.51 732.34,393.23 738.80,399.27 745.25,403.44 751.71,407.91 758.17,409.78 764.63,409.93 771.09,402.92 777.55,384.85 784.00,364.98 790.46,341.09 796.92,317.62 803.38,295.22 809.84,272.30 816.30,248.63 822.75,229.12" fill="none" stroke="#e60000" stroke-width="1.1"/>
<rect x="77.80" y="620.40" width="4.5" height="49.10" fill="#00ff00"/>
<rect x="84.26" y="618.50" width="4.5" height="51.00" fill="#00ff00"/>
<rect x="90.72" y="661.70" width="4.5" height="7.80" fill="#ff9900"/>
<rect x="97.17" y="622.80" width="4.5" height="46.70" fill="#ff9900"/>
<rect x="103.63" y="588.50" width="4.5" height="81.00" fill="#00ff00"/>
<rect x="110.09" y="635.30" width="4.5" height="34.20" fill="#00ff00"/>
<rect x="116.55" y="625.10" width="4.5" height="44.40" fill="#ff9900"/>
<rect x="123.01" y="650.60" width="4.5" height="18.90" fill="#00ff00"/>
<rect x="129.47" y="642.40" width="4.5" height="27.10" fill="#00ff00"/>
<rect x="135.92" y="640.00" width="4.5" height="29.50" fill="#ff9900"/>
<rect x="142.38" y="629.90" width="4.5" height="39.60" fill="#00ff00"/>
<rect x="148.84" y="637.70" width="4.5" height="31.80" fill="#00ff00"/>
<rect x="155.30" y="647.60" width="4.5" height="21.90" fill="#ff9900"/>
<rect x="161.76" y="638.80" width="4.5" height="30.70" fill="#ff9900"/>
<rect x="168.22" y="612.90" width="4.5" height="56.60" fill="#00ff00"/>
<rect x="174.67" y="509.90" width="4.5" height="159.60" fill="#ff9900"/>
<rect x="181.13" y="569.00" width="4.5" height="100.50" fill="#ff9900"/>
<rect x="187.59" y="617.40" width="4.5" height="52.10" fill="#00ff00"/>
<rect x="194.05" y="632.70" width="4.5" height="36.80" fill="#00ff00"/>
<rect x="200.51" y="645.70" width="4.5" height="23.80" fill="#ff9900"/>
<rect x="206.97" y="636.20" width="4.5" height="33.30" fill="#ff9900"/>
<rect x="213.42" y="549.60" width="4.5" height="119.90" fill="#ff9900"/>
<rect x="219.88" y="586.90" width="4.5" height="82.60" fill="#ff9900"/>
<rect x="226.34" y="615.70" width="4.5" height="53.80" fill="#ff9900"/>
<rect x="232.80" y="603.00" width="4.5" height="66.50" fill="#ff9900"/>
<rect x="239.26" y="636.50" width="4.5" height="33.00" fill="#ff9900"/>
<rect x="245.72" y="565.20" width="4.5" height="104.30" fill="#ff9900"/>
<rect x="252.17" y="504.00" width="4.5" height="165.50" fill="#00ff00"/>
<rect x="258.63" y="599.20" width="4.5" height="70.30" fill="#ff9900"/>
<rect x="265.09" y="576.00" width="4.5" height="93.50" fill="#00ff00"/>
<rect x="271.55" y="617.10" width="4.5" height="52.40" fill="#00ff00"/>
<rect x="278.01" y="632.20" width="4.5" height="37.30" fill="#00ff00"/>
<rect x="284.47" y="623.30" width="4.5" height="46.20" fill="#ff9900"/>
<rect x="290.92" y="650.00" width="4.5" height="19.50" fill="#ff9900"/>
<rect x="297.38" y="649.00" width="4.5" height="20.50" fill="#ff9900"/>
<rect x="303.84" y="599.60" width="4.5" height="69.90" fill="#00ff00"/>
<rect x="310.30" y="641.00" width="4.5" height="28.50" fill="#ff9900"/>
<rect x="316.76" y="578.20" width="4.5" height="91.30" fill="#00ff00"/>
<rect x="323.22" y="646.90" width="4.5" height="22.60" fill="#ff9900"/>
<rect x="329.67" y="613.80" width="4.5" height="55.70" fill="#ff9900"/>
<rect x="336.13" y="619.20" width="4.5" height="50.30" fill="#ff9900"/>
<rect x="342.59" y="563.00" width="4.5" height="106.50" fill="#ff9900"/>
<rect x="349.05" y="609.30" width="4.5" height="60.20" fill="#ff9900"/>
<rect x="355.51" y="634.10" width="4.5" height="35.40" fill="#00ff00"/>
<rect x="361.97" y="631.00" width="4.5" height="38.50" fill="#ff9900"/>
<rect x="368.42" y="591.10" width="4.5" height="78.40" fill="#00ff00"/>
<rect x="374.88" y="623.30" width="4.5" height="46.20" fill="#00ff00"/>
<rect x="381.34" y="629.20" width="4.5" height="40.30" fill="#ff9900"/>
<rect x="387.80" y="657.70" width="4.5" height="11.80" fill="#ff9900"/>
<rect x="394.26" y="645.90" width="4.5" height="23.60" fill="#ff9900"/>
<rect x="400.72" y="635.80" width="4.5" height="33.70" fill="#00ff00"/>
<rect x="407.17" y="653.70" width="4.5" height="15.80" fill="#ff9900"/>
<rect x="413.63" y="632.70" width="4.5" height="36.80" fill="#ff9900"/>
<rect x="420.09" y="624.00" width="4.5" height="45.50" fill="#00ff00"/>
<rect x="426.55" y="626.80" width="4.5" height="42.70" fill="#00ff00"/>
<rect x="433.01" y="603.00" width="4.5" height="66.50" fill="#ff9900"/>
<rect x="439.46" y="569.20" width="4.5" height="100.30" fill="#ff9900"/>
<rect x="445.92" y="635.80" width="4.5" height="33.70" fill="#ff9900"/>
<rect x="452.38" y="638.10" width="4.5" height="31.40" fill="#ff9900"/>
<rect x="458.84" y="641.70" width="4.5" height="27.80" fill="#00ff00"/>
<rect x="465.30" y="653.50" width="4.5" height="16.00" fill="#ff9900"/>
<rect x="471.76" y="658.70" width="4.5" height="10.80" fill="#ff9900"/>
<rect x="478.21" y="635.30" width="4.5" height="34.20" fill="#ff9900"/>
<rect x="484.67" y="624.00" width="4.5" height="45.50" fill="#ff9900"/>
<rect x="491.13" y="616.90" width="4.5" height="52.60" fill="#00ff00"/>
<rect x="497.59" y="638.10" width="4.5" height="31.40" fill="#00ff00"/>
<rect x="504.05" y="636.50" width="4.5" height="33.00" fill="#00ff00"/>
<rect x="510.51" y="636.20" width="4.5" height="33.30" fill="#ff9900"/>
<rect x="516.96" y="639.80" width="4.5" height="29.70" fill="#ff9900"/>
<rect x="523.42" y="638.80" width="4.5" height="30.70" fill="#00ff00"/>
<rect x="529.88" y="661.00" width="4.5" height="8.50" fill="#ff9900"/>
<rect x="536.34" y="576.70" width="4.5" height="92.80" fill="#ff9900"/>
<rect x="542.80" y="617.60" width="4.5" height="51.90" fill="#00ff00"/>
<rect x="549.26" y="610.50" width="4.5" height="59.00" fill="#00ff00"/>
<rect x="555.71" y="601.00" width="4.5" height="68.50" fill="#ff9900"/>
<rect x="562.17" y="648.00" width="4.5" height="21.50" fill="#ff9900"/>
<rect x="568.63" y="654.00" width="4.5" height="15.50" fill="#00ff00"/>
<rect x="575.09" y="644.50" width="4.5" height="25.00" fill="#00ff00"/>
<rect x="581.55" y="644.00" width="4.5" height="25.50" fill="#00ff00"/>
<rect x="588.01" y="602.00" width="4.5" height="67.50" fill="#ff9900"/>
<rect x="594.46" y="628.70" width="4.5" height="40.80" fill="#00ff00"/>
<rect x="600.92" y="625.60" width="4.5" height="43.90" fill="#ff9900"/>
<rect x="607.38" y="627.00" width="4.5" height="42.50" fill="#00ff00"/>
<rect x="613.84" y="651.80" width="4.5" height="17.70" fill="#ff9900"/>
<rect x="620.30" y="602.70" width="4.5" height="66.80" fill="#ff9900"/>
<rect x="626.76" y="642.40" width="4.5" height="27.10" fill="#ff9900"/>
<rect x="633.21" y="629.90" width="4.5" height="39.60" fill="#00ff00"/>
<rect x="639.67" y="642.40" width="4.5" height="27.10" fill="#ff9900"/>
<rect x="646.13" y="620.00" width="4.5" height="49.50" fill="#ff9900"/>
<rect x="652.59" y="618.80" width="4.5" height="50.70" fill="#00ff00"/>
<rect x="659.05" y="592.10" width="4.5" height="77.40" fill="#ff9900"/>
<rect x="665.51" y="513.70" width="4.5" height="155.80" fill="#00ff00"/>
<rect x="671.96" y="603.00" width="4.5" height="66.50" fill="#ff9900"/>
<rect x="678.42" y="616.20" width="4.5" height="53.30" fill="#ff9900"/>
<rect x="684.88" y="635.10" width="4.5" height="34.40" fill="#00ff00"/>
<rect x="691.34" y="595.90" width="4.5" height="73.60" fill="#ff9900"/>
<rect x="697.80" y="618.10" width="4.5" height="51.40" fill="#ff9900"/>
<rect x="704.26" y="620.00" width="4.5" height="49.50" fill="#ff9900"/>
<rect x="710.71" y="603.90" width="4.5" height="65.60" fill="#ff9900"/>
<rect x="717.17" y="611.10" width="4.5" height="58.40" fill="#ff9900"/>
<rect x="723.63" y="595.80" width="4.5" height="73.70" fill="#ff9900"/>
<rect x="730.09" y="584.40" width="4.5" height="85.10" fill="#00ff00"/>
<rect x="736.55" y="582.20" width="4.5" height="87.30" fill="#00ff00"/>
<rect x="743.00" y="605.60" width="4.5" height="63.90" fill="#00ff00"/>
<rect x="749.46" y="637.80" width="4.5" height="31.70" fill="#00ff00"/>
<rect x="755.92" y="661.70" width="4.5" height="7.80" fill="#00ff00"/>
<rect x="762.38" y="644.20" width="4.5" height="25.30" fill="#00ff00"/>
<rect x="768.84" y="582.50" width="4.5" height="87.00" fill="#00ff00"/>
<rect x="775.30" y="476.90" width="4.5" height="192.60" fill="#00ff00"/>
<rect x="781.75" y="576.10" width="4.5" height="93.40" fill="#00ff00"/>
<rect x="788.21" y="588.60" width="4.5" height="80.90" fill="#ff9900"/>
<rect x="794.67" y="619.40" width="4.5" height="50.10" fill="#00ff00"/>
<rect x="801.13" y="626.10" width="4.5" height="43.40" fill="#ff9900"/>
<rect x="807.59" y="613.30" width="4.5" height="56.20" fill="#00ff00"/>
<rect x="814.05" y="618.60" width="4.5" height="50.90" fill="#00ff00"/>
<rect x="820.50" y="593.60" width="4.5" height="75.90" fill="#ff9900"/>
<rect x="50.5" y="28.5" width="806" height="641" fill="none" stroke="#d0d0d0" stroke-width="1"/>
<line x1="50.5" y1="469.5" x2="856.5" y2="469.5" stroke="#eeeeee" stroke-width="1"/>
<line x1="856.5" y1="76.40" x2="864" y2="76.40" stroke="#d0d0d0" stroke-width="1"/>
<text x="871" y="81.60" font-family="Liberation Sans" font-size="12" fill="#eeeeee">75</text>
<line x1="856.5" y1="147.56" x2="864" y2="147.56" stroke="#d0d0d0" stroke-width="1"/>
<text x="871" y="152.76" font-family="Liberation Sans" font-size="12" fill="#eeeeee">70</text>
<line x1="856.5" y1="218.72" x2="864" y2="218.72" stroke="#d0d0d0" stroke-width="1"/>
<text x="871" y="223.92" font-family="Liberation Sans" font-size="12" fill="#eeeeee">65</text>
<line x1="856.5" y1="289.88" x2="864" y2="289.88" stroke="#d0d0d0" stroke-width="1"/>
<text x="871" y="295.08" font-family="Liberation Sans" font-size="12" fill="#eeeeee">60</text>
<line x1="856.5" y1="361.04" x2="864" y2="361.04" stroke="#d0d0d0" stroke-width="1"/>
<text x="871" y="366.24" font-family="Liberation Sans" font-size="12" fill="#eeeeee">55</text>
<line x1="856.5" y1="432.20" x2="864" y2="432.20" stroke="#d0d0d0" stroke-width="1"/>
<text x="871" y="437.40" font-family="Liberation Sans" font-size="12" fill="#eeeeee">50</text>
<line x1="43" y1="505.00" x2="50.5" y2="505.00" stroke="#b0b0b0" stroke-width="1.2"/>
<text x="35.4" y="509.60" text-anchor="end" font-family="Liberation Sans" font-size="12" fill="#eeeeee">20</text>
<line x1="43" y1="553.33" x2="50.5" y2="553.33" stroke="#b0b0b0" stroke-width="1.2"/>
<text x="35.4" y="557.93" text-anchor="end" font-family="Liberation Sans" font-size="12" fill="#eeeeee">15</text>
<line x1="43" y1="601.66" x2="50.5" y2="601.66" stroke="#b0b0b0" stroke-width="1.2"/>
<text x="35.4" y="606.26" text-anchor="end" font-family="Liberation Sans" font-size="12" fill="#eeeeee">10</text>
<line x1="43" y1="650.00" x2="50.5" y2="650.00" stroke="#b0b0b0" stroke-width="1.2"/>
<text x="35.4" y="654.60" text-anchor="end" font-family="Liberation Sans" font-size="12" fill="#eeeeee">5</text>
<line x1="80.05" y1="669.5" x2="80.05" y2="677" stroke="#999999" stroke-width="1"/>
<line x1="86.51" y1="669.5" x2="86.51" y2="677" stroke="#3a3a3a" stroke-width="1"/>
<line x1="92.97" y1="669.5" x2="92.97" y2="677" stroke="#3a3a3a" stroke-width="1"/>
<line x1="99.42" y1="669.5" x2="99.42" y2="677" stroke="#999999" stroke-width="1"/>
<line x1="105.88" y1="669.5" x2="105.88" y2="677" stroke="#3a3a3a" stroke-width="1"/>
<line x1="112.34" y1="669.5" x2="112.34" y2="677" stroke="#3a3a3a" stroke-width="1"/>
<line x1="118.80" y1="669.5" x2="118.80" y2="677" stroke="#3a3a3a" stroke-width="1"/>
<line x1="125.26" y1="669.5" x2="125.26" y2="677" stroke="#3a3a3a" stroke-width="1"/>
<line x1="131.72" y1="669.5" x2="131.72" y2="677" stroke="#999999" stroke-width="1"/>
<line x1="138.17" y1="669.5" x2="138.17" y2="677" stroke="#3a3a3a" stroke-width="1"/>
<line x1="144.63" y1="669.5" x2="144.63" y2="677" stroke="#3a3a3a" stroke-width="1"/>
<line x1="151.09" y1="669.5" x2="151.09" y2="677" stroke="#3a3a3a" stroke-width="1"/>
<line x1="157.55" y1="669.5" x2="157.55" y2="677" stroke="#3a3a3a" stroke-width="1"/>
<line x1="164.01" y1="669.5" x2="164.01" y2="677" stroke="#999999" stroke-width="1"/>
<line x1="170.47" y1="669.5" x2="170.47" y2="677" stroke="#3a3a3a" stroke-width="1"/>
<line x1="176.92" y1="669.5" x2="176.92" y2="677" stroke="#3a3a3a" stroke-width="1"/>
<line x1="183.38" y1="669.5" x2="183.38" y2="677" stroke="#3a3a3a" stroke-width="1"/>
<line x1="189.84" y1="669.5" x2="189.84" y2="677" stroke="#3a3a3a" stroke-width="1"/>
<line x1="196.30" y1="669.5" x2="196.30" y2="677" stroke="#999999" stroke-width="1"/>
<line x1="202.76" y1="669.5" x2="202.76" y2="677" stroke="#3a3a3a" stroke-width="1"/>
<line x1="209.22" y1="669.5" x2="209.22" y2="677" stroke="#3a3a3a" stroke-width="1"/>
<line x1="215.67" y1="669.5" x2="215.67" y2="677" stroke="#3a3a3a" stroke-width="1"/>
<line x1="222.13" y1="669.5" x2="222.13" y2="677" stroke="#3a3a3a" stroke-width="1"/>
<line x1="228.59" y1="669.5" x2="228.59" y2="677" stroke="#999999" stroke-width="1"/>
<line x1="235.05" y1="669.5" x2="235.05" y2="677" stroke="#3a3a3a" stroke-width="1"/>
<line x1="241.51" y1="669.5" x2="241.51" y2="677" stroke="#3a3a3a" stroke-width="1"/>
<line x1="247.97" y1="669.5" x2="247.97" y2="677" stroke="#3a3a3a" stroke-width="1"/>
<line x1="254.42" y1="669.5" x2="254.42" y2="677" stroke="#3a3a3a" stroke-width="1"/>
<line x1="260.88" y1="669.5" x2="260.88" y2="677" stroke="#999999" stroke-width="1"/>
<line x1="267.34" y1="669.5" x2="267.34" y2="677" stroke="#3a3a3a" stroke-width="1"/>
<line x1="273.80" y1="669.5" x2="273.80" y2="677" stroke="#3a3a3a" stroke-width="1"/>
<line x1="280.26" y1="669.5" x2="280.26" y2="677" stroke="#3a3a3a" stroke-width="1"/>
<line x1="286.72" y1="669.5" x2="286.72" y2="677" stroke="#3a3a3a" stroke-width="1"/>
<line x1="293.17" y1="669.5" x2="293.17" y2="677" stroke="#999999" stroke-width="1"/>
<line x1="299.63" y1="669.5" x2="299.63" y2="677" stroke="#3a3a3a" stroke-width="1"/>
<line x1="306.09" y1="669.5" x2="306.09" y2="677" stroke="#3a3a3a" stroke-width="1"/>
<line x1="312.55" y1="669.5" x2="312.55" y2="677" stroke="#3a3a3a" stroke-width="1"/>
<line x1="319.01" y1="669.5" x2="319.01" y2="677" stroke="#3a3a3a" stroke-width="1"/>
<line x1="325.47" y1="669.5" x2="325.47" y2="677" stroke="#999999" stroke-width="1"/>
<line x1="331.92" y1="669.5" x2="331.92" y2="677" stroke="#3a3a3a" stroke-width="1"/>
<line x1="338.38" y1="669.5" x2="338.38" y2="677" stroke="#3a3a3a" stroke-width="1"/>
<line x1="344.84" y1="669.5" x2="344.84" y2="677" stroke="#3a3a3a" stroke-width="1"/>
<line x1="351.30" y1="669.5" x2="351.30" y2="677" stroke="#3a3a3a" stroke-width="1"/>
<line x1="357.76" y1="669.5" x2="357.76" y2="677" stroke="#3a3a3a" stroke-width="1"/>
<line x1="364.22" y1="669.5" x2="364.22" y2="677" stroke="#3a3a3a" stroke-width="1"/>
<line x1="370.67" y1="669.5" x2="370.67" y2="677" stroke="#3a3a3a" stroke-width="1"/>
<line x1="377.13" y1="669.5" x2="377.13" y2="677" stroke="#3a3a3a" stroke-width="1"/>
<line x1="383.59" y1="669.5" x2="383.59" y2="677" stroke="#999999" stroke-width="1"/>
<line x1="390.05" y1="669.5" x2="390.05" y2="677" stroke="#3a3a3a" stroke-width="1"/>
<line x1="396.51" y1="669.5" x2="396.51" y2="677" stroke="#3a3a3a" stroke-width="1"/>
<line x1="402.97" y1="669.5" x2="402.97" y2="677" stroke="#3a3a3a" stroke-width="1"/>
<line x1="409.42" y1="669.5" x2="409.42" y2="677" stroke="#3a3a3a" stroke-width="1"/>
<line x1="415.88" y1="669.5" x2="415.88" y2="677" stroke="#999999" stroke-width="1"/>
<line x1="422.34" y1="669.5" x2="422.34" y2="677" stroke="#3a3a3a" stroke-width="1"/>
<line x1="428.80" y1="669.5" x2="428.80" y2="677" stroke="#3a3a3a" stroke-width="1"/>
<line x1="435.26" y1="669.5" x2="435.26" y2="677" stroke="#3a3a3a" stroke-width="1"/>
<line x1="441.71" y1="669.5" x2="441.71" y2="677" stroke="#3a3a3a" stroke-width="1"/>
<line x1="448.17" y1="669.5" x2="448.17" y2="677" stroke="#999999" stroke-width="1"/>
<line x1="454.63" y1="669.5" x2="454.63" y2="677" stroke="#3a3a3a" stroke-width="1"/>
<line x1="461.09" y1="669.5" x2="461.09" y2="677" stroke="#3a3a3a" stroke-width="1"/>
<line x1="467.55" y1="669.5" x2="467.55" y2="677" stroke="#3a3a3a" stroke-width="1"/>
<line x1="474.01" y1="669.5" x2="474.01" y2="677" stroke="#3a3a3a" stroke-width="1"/>
<line x1="480.46" y1="669.5" x2="480.46" y2="677" stroke="#999999" stroke-width="1"/>
<line x1="486.92" y1="669.5" x2="486.92" y2="677" stroke="#3a3a3a" stroke-width="1"/>
<line x1="493.38" y1="669.5" x2="493.38" y2="677" stroke="#3a3a3a" stroke-width="1"/>
<line x1="499.84" y1="669.5" x2="499.84" y2="677" stroke="#3a3a3a" stroke-width="1"/>
<line x1="506.30" y1="669.5" x2="506.30" y2="677" stroke="#3a3a3a" stroke-width="1"/>
<line x1="512.76" y1="669.5" x2="512.76" y2="677" stroke="#999999" stroke-width="1"/>
<line x1="519.21" y1="669.5" x2="519.21" y2="677" stroke="#3a3a3a" stroke-width="1"/>
<line x1="525.67" y1="669.5" x2="525.67" y2="677" stroke="#3a3a3a" stroke-width="1"/>
<line x1="532.13" y1="669.5" x2="532.13" y2="677" stroke="#3a3a3a" stroke-width="1"/>
<line x1="538.59" y1="669.5" x2="538.59" y2="677" stroke="#3a3a3a" stroke-width="1"/>
<line x1="545.05" y1="669.5" x2="545.05" y2="677" stroke="#999999" stroke-width="1"/>
<line x1="551.51" y1="669.5" x2="551.51" y2="677" stroke="#3a3a3a" stroke-width="1"/>
<line x1="557.96" y1="669.5" x2="557.96" y2="677" stroke="#3a3a3a" stroke-width="1"/>
<line x1="564.42" y1="669.5" x2="564.42" y2="677" stroke="#3a3a3a" stroke-width="1"/>
<line x1="570.88" y1="669.5" x2="570.88" y2="677" stroke="#3a3a3a" stroke-width="1"/>
<line x1="577.34" y1="669.5" x2="577.34" y2="677" stroke="#999999" stroke-width="1"/>
<line x1="583.80" y1="669.5" x2="583.80" y2="677" stroke="#3a3a3a" stroke-width="1"/>
<line x1="590.26" y1="669.5" x2="590.26" y2="677" stroke="#3a3a3a" stroke-width="1"/>
<line x1="596.71" y1="669.5" x2="596.71" y2="677" stroke="#3a3a3a" stroke-width="1"/>
<line x1="603.17" y1="669.5" x2="603.17" y2="677" stroke="#3a3a3a" stroke-width="1"/>
<line x1="609.63" y1="669.5" x2="609.63" y2="677" stroke="#999999" stroke-width="1"/>
<line x1="616.09" y1="669.5" x2="616.09" y2="677" stroke="#3a3a3a" stroke-width="1"/>
<line x1="622.55" y1="669.5" x2="622.55" y2="677" stroke="#3a3a3a" stroke-width="1"/>
<line x1="629.01" y1="669.5" x2="629.01" y2="677" stroke="#3a3a3a" stroke-width="1"/>
<line x1="635.46" y1="669.5" x2="635.46" y2="677" stroke="#3a3a3a" stroke-width="1"/>
<line x1="641.92" y1="669.5" x2="641.92" y2="677" stroke="#999999" stroke-width="1"/>
<line x1="648.38" y1="669.5" x2="648.38" y2="677" stroke="#3a3a3a" stroke-width="1"/>
<line x1="654.84" y1="669.5" x2="654.84" y2="677" stroke="#3a3a3a" stroke-width="1"/>
<line x1="661.30" y1="669.5" x2="661.30" y2="677" stroke="#3a3a3a" stroke-width="1"/>
<line x1="667.76" y1="669.5" x2="667.76" y2="677" stroke="#3a3a3a" stroke-width="1"/>
<line x1="674.21" y1="669.5" x2="674.21" y2="677" stroke="#999999" stroke-width="1"/>
<line x1="680.67" y1="669.5" x2="680.67" y2="677" stroke="#3a3a3a" stroke-width="1"/>
<line x1="687.13" y1="669.5" x2="687.13" y2="677" stroke="#3a3a3a" stroke-width="1"/>
<line x1="693.59" y1="669.5" x2="693.59" y2="677" stroke="#3a3a3a" stroke-width="1"/>
<line x1="700.05" y1="669.5" x2="700.05" y2="677" stroke="#3a3a3a" stroke-width="1"/>
<line x1="706.51" y1="669.5" x2="706.51" y2="677" stroke="#999999" stroke-width="1"/>
<line x1="712.96" y1="669.5" x2="712.96" y2="677" stroke="#3a3a3a" stroke-width="1"/>
<line x1="719.42" y1="669.5" x2="719.42" y2="677" stroke="#3a3a3a" stroke-width="1"/>
<line x1="725.88" y1="669.5" x2="725.88" y2="677" stroke="#3a3a3a" stroke-width="1"/>
<line x1="732.34" y1="669.5" x2="732.34" y2="677" stroke="#3a3a3a" stroke-width="1"/>
<line x1="738.80" y1="669.5" x2="738.80" y2="677" stroke="#999999" stroke-width="1"/>
<line x1="745.25" y1="669.5" x2="745.25" y2="677" stroke="#3a3a3a" stroke-width="1"/>
<line x1="751.71" y1="669.5" x2="751.71" y2="677" stroke="#3a3a3a" stroke-width="1"/>
<line x1="758.17" y1="669.5" x2="758.17" y2="677" stroke="#3a3a3a" stroke-width="1"/>
<line x1="764.63" y1="669.5" x2="764.63" y2="677" stroke="#999999" stroke-width="1"/>
<line x1="771.09" y1="669.5" x2="771.09" y2="677" stroke="#3a3a3a" stroke-width="1"/>
<line x1="777.55" y1="669.5" x2="777.55" y2="677" stroke="#3a3a3a" stroke-width="1"/>
<line x1="784.00" y1="669.5" x2="784.00" y2="677" stroke="#3a3a3a" stroke-width="1"/>
<line x1="790.46" y1="669.5" x2="790.46" y2="677" stroke="#3a3a3a" stroke-width="1"/>
<line x1="796.92" y1="669.5" x2="796.92" y2="677" stroke="#999999" stroke-width="1"/>
<line x1="803.38" y1="669.5" x2="803.38" y2="677" stroke="#3a3a3a" stroke-width="1"/>
<line x1="809.84" y1="669.5" x2="809.84" y2="677" stroke="#3a3a3a" stroke-width="1"/>
<line x1="816.30" y1="669.5" x2="816.30" y2="677" stroke="#3a3a3a" stroke-width="1"/>
<line x1="822.75" y1="669.5" x2="822.75" y2="677" stroke="#999999" stroke-width="1"/>
<text x="80.05" y="695.5" text-anchor="middle" font-family="Liberation Sans" font-size="12" fill="#eeeeee">Jul 01</text>
<text x="80.05" y="709.5" text-anchor="middle" font-family="Liberation Sans" font-size="12" fill="#eeeeee">2025</text>
<text x="131.72" y="695.5" text-anchor="middle" font-family="Liberation Sans" font-size="12" fill="#eeeeee">Jul 14</text>
<text x="131.72" y="709.5" text-anchor="middle" font-family="Liberation Sans" font-size="12" fill="#eeeeee">2025</text>
<text x="196.30" y="695.5" text-anchor="middle" font-family="Liberation Sans" font-size="12" fill="#eeeeee">Jul 28</text>
<text x="196.30" y="709.5" text-anchor="middle" font-family="Liberation Sans" font-size="12" fill="#eeeeee">2025</text>
<text x="260.88" y="695.5" text-anchor="middle" font-family="Liberation Sans" font-size="12" fill="#eeeeee">Aug 11</text>
<text x="260.88" y="709.5" text-anchor="middle" font-family="Liberation Sans" font-size="12" fill="#eeeeee">2025</text>
<text x="325.47" y="695.5" text-anchor="middle" font-family="Liberation Sans" font-size="12" fill="#eeeeee">Aug 25</text>
<text x="325.47" y="709.5" text-anchor="middle" font-family="Liberation Sans" font-size="12" fill="#eeeeee">2025</text>
<text x="383.59" y="695.5" text-anchor="middle" font-family="Liberation Sans" font-size="12" fill="#eeeeee">Sep 08</text>
<text x="383.59" y="709.5" text-anchor="middle" font-family="Liberation Sans" font-size="12" fill="#eeeeee">2025</text>
<text x="448.17" y="695.5" text-anchor="middle" font-family="Liberation Sans" font-size="12" fill="#eeeeee">Sep 22</text>
<text x="448.17" y="709.5" text-anchor="middle" font-family="Liberation Sans" font-size="12" fill="#eeeeee">2025</text>
<text x="512.76" y="695.5" text-anchor="middle" font-family="Liberation Sans" font-size="12" fill="#eeeeee">Oct 06</text>
<text x="512.76" y="709.5" text-anchor="middle" font-family="Liberation Sans" font-size="12" fill="#eeeeee">2025</text>
<text x="577.34" y="695.5" text-anchor="middle" font-family="Liberation Sans" font-size="12" fill="#eeeeee">Oct 20</text>
<text x="577.34" y="709.5" text-anchor="middle" font-family="Liberation Sans" font-size="12" fill="#eeeeee">2025</text>
<text x="641.92" y="695.5" text-anchor="middle" font-family="Liberation Sans" font-size="12" fill="#eeeeee">Nov 03</text>
<text x="641.92" y="709.5" text-anchor="middle" font-family="Liberation Sans" font-size="12" fill="#eeeeee">2025</text>
<text x="706.51" y="695.5" text-anchor="middle" font-family="Liberation Sans" font-size="12" fill="#eeeeee">Nov 17</text>
<text x="706.51" y="709.5" text-anchor="middle" font-family="Liberation Sans" font-size="12" fill="#eeeeee">2025</text>
<text x="764.63" y="695.5" text-anchor="middle" font-family="Liberation Sans" font-size="12" fill="#eeeeee">Dec 01</text>
<text x="764.63" y="709.5" text-anchor="middle" font-family="Liberation Sans" font-size="12" fill="#eeeeee">2025</text>
<text x="822.75" y="695.5" text-anchor="middle" font-family="Liberation Sans" font-size="12" fill="#eeeeee">Dec 12</text>
<text x="822.75" y="709.5" text-anchor="middle" font-family="Liberation Sans" font-size="12" fill="#eeeeee">2025</text>
<text x="50" y="20" font-family="Liberation Sans" font-weight="bold" font-size="14.5" fill="#eeeeee" xml:space="preserve">MCHP  6 month - daily close</text>
<text x="856.5" y="20" text-anchor="end" font-family="Liberation Sans" font-weight="bold" font-size="14.5" fill="#999999">[2025-07-01/2025-12-12]</text>
<text x="72.5" y="47" font-family="Liberation Sans" font-size="12" fill="#ff9900">Last</text>
<text x="97.9" y="47" font-family="Liberation Sans" font-size="12.4" fill="#ff9900" textLength="107.6" lengthAdjust="spacingAndGlyphs">67.1800003051758</text>
<text x="72" y="487.6" font-family="Liberation Sans" font-size="12.3" fill="#eeeeee">Volume (millions):</text>
<text x="72" y="501.6" font-family="Liberation Sans" font-size="12.3" fill="#ff9900">10,814,077</text>
</svg></body></html>
